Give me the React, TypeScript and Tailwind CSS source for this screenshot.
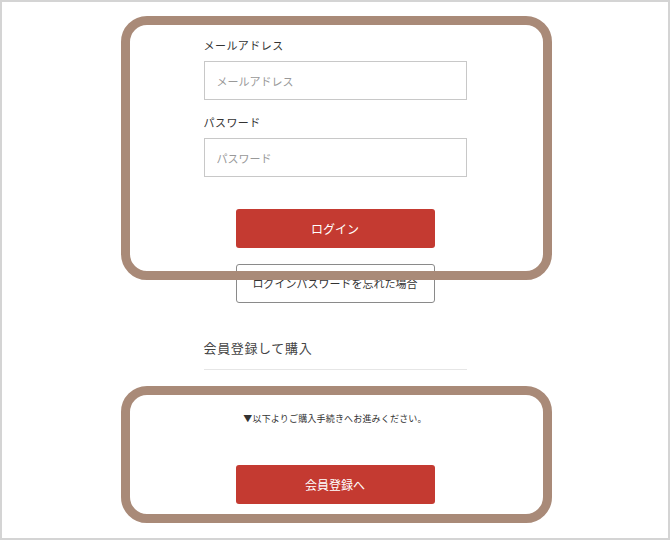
import React from 'react'

const FONT = { fontFamily: '"Noto Sans CJK JP", "Noto Sans", sans-serif' }

function Field({ label, placeholder, type }: { label: string; placeholder: string; type: string }) {
  return (
    <div className="flex flex-col">
      <label className="text-[11px] leading-[16px] tracking-[0.04em] text-[#333] mb-[8px]">{label}</label>
      <input
        type={type}
        placeholder={placeholder}
        className="h-[39px] w-full border border-[#c8c8c8] bg-white px-[12px] text-[11px] text-[#333] placeholder:text-[#999] outline-none"
      />
    </div>
  )
}

export default function App() {
  return (
    <div className="relative w-[670px] h-[540px] border-2 border-[#d4d4d4] bg-white overflow-hidden" style={FONT}>
      <div className="mx-auto w-[263px] pt-[35px] flex flex-col">
        <Field label="メールアドレス" placeholder="メールアドレス" type="email" />
        <div className="mt-[14px]">
          <Field label="パスワード" placeholder="パスワード" type="password" />
        </div>

        <button className="mx-auto mt-[32px] h-[39px] w-[199px] rounded-[3px] bg-[#c43a31] text-[12px] text-white">
          ログイン
        </button>
        <button className="mx-auto mt-[16px] h-[39px] w-[199px] rounded-[3px] border border-[#8a8a8a] bg-white text-[11px] text-[#333]">
          ログインパスワードを忘れた場合
        </button>

        <h2 className="mt-[35px] pb-[11px] border-b border-[#e6e6e6] text-[13px] leading-[20px] tracking-[0.05em] text-[#444]">
          会員登録して購入
        </h2>

        <p className="mt-[42px] text-center text-[9px] leading-[14px] tracking-[0.02em] text-[#333]">
          ▼以下よりご購入手続きへお進みください。
        </p>
        <button className="mx-auto mt-[39px] h-[39px] w-[199px] rounded-[3px] bg-[#c43a31] text-[12px] text-white">
          会員登録へ
        </button>
      </div>

      {/* 注目枠 */}
      <div className="absolute left-[119px] top-[14px] w-[431px] h-[264px] rounded-[26px] border-[9px] border-[#a98a78] pointer-events-none" />
      <div className="absolute left-[119px] top-[384px] w-[431px] h-[137px] rounded-[26px] border-[9px] border-[#a98a78] pointer-events-none" />
    </div>
  )
}
